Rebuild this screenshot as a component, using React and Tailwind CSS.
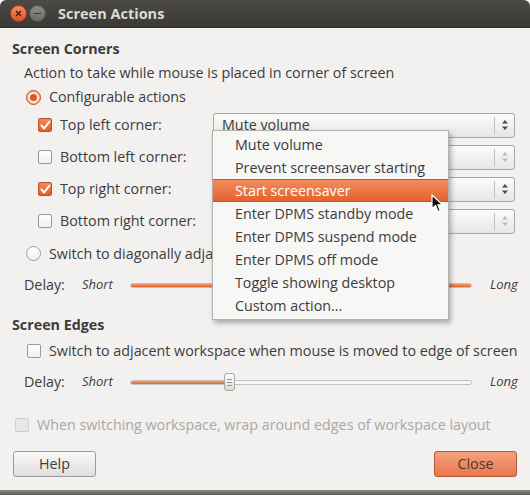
import { useState } from "react";

const font = { fontFamily: '"Open Sans", "Noto Sans", sans-serif' };

function Check({ checked, disabled }) {
    if (checked) {
        return (
            <span className="flex h-[14px] w-[14px] shrink-0 items-center justify-center rounded-[2px] border border-[#b4532b] bg-gradient-to-b from-[#f08a5a] to-[#dd5f2a]">
                <svg width="11" height="11" viewBox="0 0 11 11">
                    <path d="M1.5 5.5 L4.2 8.5 L9.5 1.5" fill="none" stroke="#fff" strokeWidth="2" strokeLinecap="round" strokeLinejoin="round" />
                </svg>
            </span>
        );
    }
    return (
        <span
            className={
                disabled
                    ? "h-[14px] w-[14px] shrink-0 rounded-[2px] border border-[#cfcdca] bg-[#e9e8e6]"
                    : "h-[14px] w-[14px] shrink-0 rounded-[2px] border border-[#9c9a97] bg-gradient-to-b from-[#ffffff] to-[#f1f0ef]"
            }
        />
    );
}

function Radio({ on }) {
    if (on) {
        return (
            <span className="flex h-[15px] w-[15px] shrink-0 items-center justify-center rounded-full border border-[#b4532b] bg-[#f6b79a]">
                <span className="flex h-[11px] w-[11px] items-center justify-center rounded-full bg-[#fbe3d6]">
                    <span className="h-[7px] w-[7px] rounded-full bg-[#dd5a22]" />
                </span>
            </span>
        );
    }
    return <span className="h-[15px] w-[15px] shrink-0 rounded-full border border-[#9c9a97] bg-gradient-to-b from-[#ffffff] to-[#f0efee]" />;
}

function Combo({ text, dim }) {
    const arrow = dim ? "#c0bebb" : "#4a4a4a";
    return (
        <div className="flex h-[25px] w-[302px] items-center rounded-[3px] border border-[#a9a7a4] bg-gradient-to-b from-[#fbfbfb] to-[#e7e6e4]">
            <span className="flex-1 pl-[8px] text-[14.3px] text-[#3c3c3c]">{text}</span>
            <span className="h-[17px] w-px bg-[#c4c2bf]" />
            <span className="flex w-[19px] justify-center">
                <svg width="8" height="14" viewBox="0 0 8 14">
                    <path d="M4 2 L7 5.5 L1 5.5 Z" fill={arrow} />
                    <path d="M4 12 L7 8.5 L1 8.5 Z" fill={arrow} />
                </svg>
            </span>
        </div>
    );
}

function Slider({ fill, thumb }) {
    return (
        <div className="relative flex h-[20px] w-[342px] items-center">
            <div className="flex h-[5px] w-full overflow-hidden rounded-full border border-[#c3c1be] bg-[#f7f7f6]">
                <div className="h-full bg-gradient-to-b from-[#f39a6e] to-[#e2622c]" style={{ width: fill }} />
            </div>
            {thumb && (
                <div
                    className="absolute top-[1px] flex h-[18px] w-[11px] flex-col items-center justify-center gap-[2px] rounded-[3px] border border-[#a8a6a3] bg-gradient-to-b from-[#fdfdfd] to-[#dedcd9]"
                    style={{ left: thumb }}
                >
                    <span className="h-px w-[5px] bg-[#9a9895]" />
                    <span className="h-px w-[5px] bg-[#9a9895]" />
                    <span className="h-px w-[5px] bg-[#9a9895]" />
                </div>
            )}
        </div>
    );
}

function DelayRow({ fill, thumb, h }) {
    return (
        <div className={`flex items-center pl-[24px] ${h}`}>
            <span className="w-[58px] text-[14.3px]">Delay:</span>
            <span className="w-[48px] text-[13px] italic">Short</span>
            <Slider fill={fill} thumb={thumb} />
            <span className="ml-[18px] text-[13px] italic">Long</span>
        </div>
    );
}

const menuItems = [
    "Mute volume",
    "Prevent screensaver starting",
    "Start screensaver",
    "Enter DPMS standby mode",
    "Enter DPMS suspend mode",
    "Enter DPMS off mode",
    "Toggle showing desktop",
    "Custom action...",
];

export default function App() {
    const [active] = useState(2);
    const corners = [
        { label: "Top left corner:", checked: true, value: "Mute volume", dim: false },
        { label: "Bottom left corner:", checked: false, value: "", dim: true },
        { label: "Top right corner:", checked: true, value: "", dim: false },
        { label: "Bottom right corner:", checked: false, value: "", dim: true },
    ];

    return (
        <div className="relative flex h-[495px] w-[530px] flex-col overflow-hidden bg-white text-[#3c3c3c]" style={font}>
            {/* Title bar */}
            <div className="flex h-[28px] shrink-0 items-center rounded-t-[6px] border-b border-[#2f2e2b] bg-gradient-to-b from-[#4b4a46] to-[#3a3935] pl-[10px]">
                <span className="flex h-[17px] w-[17px] items-center justify-center rounded-full border border-[#a1401c] bg-gradient-to-b from-[#f78a5e] to-[#e05428]">
                    <svg width="7" height="7" viewBox="0 0 7 7">
                        <path d="M1 1 L6 6 M6 1 L1 6" stroke="#4a1e0c" strokeWidth="1.4" />
                    </svg>
                </span>
                <span className="ml-[2px] flex h-[17px] w-[17px] items-center justify-center rounded-full border border-[#55544f] bg-gradient-to-b from-[#8d8b85] to-[#6c6a65]">
                    <span className="h-[1.5px] w-[7px] bg-[#3a3935]" />
                </span>
                <span className="ml-[12px] text-[14.5px] font-bold text-[#dfdbd2]">Screen Actions</span>
            </div>

            {/* Body */}
            <div className="flex flex-1 flex-col bg-[#f2f1f0]">
                <div className="mt-[9px] flex h-[24px] items-center pl-[12px] text-[14.3px] font-bold">Screen Corners</div>
                <div className="flex h-[24px] items-center pl-[24px] text-[14.3px]">
                    Action to take while mouse is placed in corner of screen
                </div>
                <div className="flex h-[24px] items-center gap-[8px] pl-[26px] text-[14.3px]">
                    <Radio on />
                    <span>Configurable actions</span>
                </div>
                {corners.map((c) => (
                    <div key={c.label} className="flex h-[32px] items-center">
                        <div className="flex w-[213px] items-center gap-[8px] pl-[38px] text-[14.3px]">
                            <Check checked={c.checked} />
                            <span>{c.label}</span>
                        </div>
                        <Combo text={c.value} dim={c.dim} />
                    </div>
                ))}
                <div className="flex h-[33px] items-center gap-[8px] pl-[26px] text-[14.3px]">
                    <Radio />
                    <span className="whitespace-nowrap">Switch to diagonally adjacent workspace</span>
                </div>
                <DelayRow fill="100%" h="h-[30px]" />

                <div className="mt-[10px] flex h-[30px] items-center pl-[12px] text-[14.3px] font-bold">Screen Edges</div>
                <div className="flex h-[22px] items-center gap-[8px] pl-[27px] text-[14.3px]">
                    <Check />
                    <span>Switch to adjacent workspace when mouse is moved to edge of screen</span>
                </div>
                <DelayRow fill="100px" thumb="94px" h="h-[40px]" />

                <div className="flex h-[46px] items-center gap-[8px] pl-[15px] text-[14.3px] text-[#a9a8a5]">
                    <Check disabled />
                    <span>When switching workspace, wrap around edges of workspace layout</span>
                </div>

                <div className="mt-[3px] flex items-center justify-between px-[13px]">
                    <button className="flex h-[26px] w-[83px] items-center justify-center rounded-[3px] border border-[#9d9b98] bg-gradient-to-b from-[#fafafa] to-[#dfdedc] text-[14.3px] text-[#3c3c3c]">
                        Help
                    </button>
                    <button className="flex h-[26px] w-[83px] items-center justify-center rounded-[3px] border border-[#b65a38] bg-gradient-to-b from-[#f4a27e] to-[#e8764c] text-[14.3px] text-[#4a3a33]">
                        Close
                    </button>
                </div>
                <div className="flex-1" />
                <div className="h-[5px] bg-gradient-to-b from-[#8a8986] to-[#5b5a57]" />
            </div>

            {/* Popup menu */}
            <div className="absolute left-[212px] top-[130px] w-[237px] border border-[#b3b1ae] bg-[#f7f7f6] py-[2px] shadow-[2px_3px_5px_rgba(0,0,0,0.3)]">
                {menuItems.map((item, i) => (
                    <div
                        key={item}
                        className={
                            i === active
                                ? "flex h-[23px] items-center border-y border-[#c4552a] bg-gradient-to-b from-[#f38b5b] to-[#e3622c] pl-[22px] text-[14.3px] text-white"
                                : "flex h-[23px] items-center pl-[22px] text-[14.3px] text-[#3c3c3c]"
                        }
                    >
                        {item}
                    </div>
                ))}
            </div>

            {/* Mouse pointer */}
            <svg className="absolute left-[431px] top-[194px]" width="14" height="20" viewBox="0 0 14 20">
                <path d="M1 1 L1 15 L4.5 11.5 L7 17.5 L9.2 16.5 L6.8 10.8 L11.5 10.8 Z" fill="#111" stroke="#fff" strokeWidth="1.2" strokeLinejoin="round" />
            </svg>
        </div>
    );
}
